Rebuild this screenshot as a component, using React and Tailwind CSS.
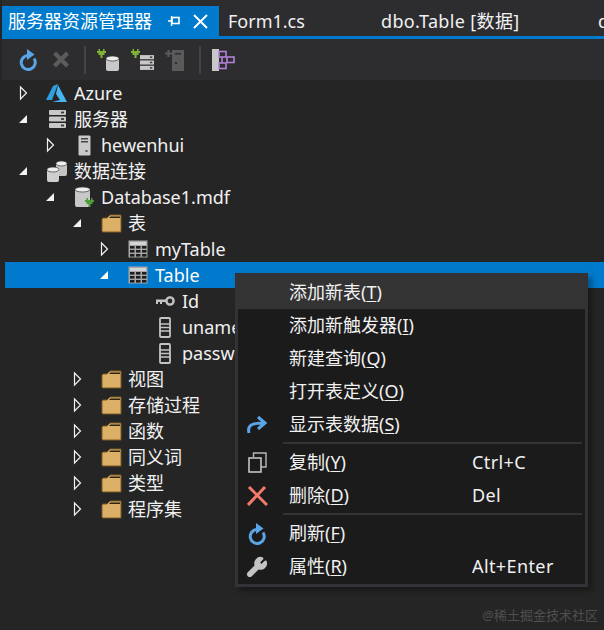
import { Wrench } from 'lucide-react'

const font = { fontFamily: '"Noto Sans", "Noto Sans CJK SC", sans-serif' }

function Expander({ open, active }) {
  if (open) {
    return (
      <svg width="12" height="12" viewBox="0 0 12 12">
        <path d="M10 2 V10 H2 Z" fill={active ? '#ffffff' : '#f1f1f1'} />
      </svg>
    )
  }
  return (
    <svg width="12" height="16" viewBox="0 0 12 16">
      <path d="M3.5 2 L9.5 8 L3.5 14 Z" fill="none" stroke="#f1f1f1" strokeWidth="1.2" />
    </svg>
  )
}

function Refresh() {
  return (
    <svg width="20" height="22" viewBox="0 0 20 22">
      <path d="M10 6.5 A7 7 0 1 0 16 9.5" fill="none" stroke="#5aa5e6" strokeWidth="3" />
      <path d="M9 0 L16.5 5.5 L9 11 Z" fill="#5aa5e6" />
    </svg>
  )
}

function Folder() {
  return (
    <svg width="21" height="20" viewBox="0 0 21 20">
      <path d="M1 6 L1 18 Q1 19 2 19 L20 19 L20 2 L9 2 L6 5 L2 5 Z" fill="#dcb067" stroke="#7b5a22" strokeWidth="1" />
      <path d="M8 5 L9.5 3.5 L19 3.5 L19 5 Z" fill="#2d2418" />
    </svg>
  )
}

function TableIcon() {
  return (
    <svg width="20" height="18" viewBox="0 0 20 18">
      <rect x="0.5" y="0.5" width="19" height="17" fill="#a8a8a8" />
      <rect x="2" y="2" width="16" height="3" fill="#d4d4d4" />
      {[6, 10, 14].map((y) =>
        [2, 8, 14].map((x) => <rect key={x + '-' + y} x={x} y={y} width="4.5" height="2.6" fill="#1e1e1e" />)
      )}
    </svg>
  )
}

function Server({ width = 17, height = 18 }) {
  return (
    <svg width={width} height={height} viewBox="0 0 17 18">
      {[0, 6.5, 13].map((y) => (
        <g key={y}>
          <rect x="0" y={y} width="17" height="5" rx="1" fill="#c8c8c8" />
          <rect x="12" y={y + 1.6} width="3" height="1.8" fill="#3a3a3a" />
        </g>
      ))}
    </svg>
  )
}

function Can({ x, y, w, h, fill = '#c4c4c4' }) {
  return (
    <g>
      <rect x={x} y={y + 2} width={w} height={h - 2} rx="2" fill={fill} />
      <ellipse cx={x + w / 2} cy={y + 2.5} rx={w / 2} ry="2.5" fill="#eeeeee" stroke="#333" strokeWidth="0.7" />
    </g>
  )
}

function Plug({ x, y, fill = '#7fb239' }) {
  return (
    <g transform={`translate(${x} ${y})`} fill={fill}>
      <rect x="0" y="2" width="9" height="2" />
      <rect x="1.5" y="4" width="6" height="2" />
      <rect x="3.5" y="6" width="2" height="3" />
      <rect x="1.5" y="0" width="1.5" height="2" />
      <rect x="6" y="0" width="1.5" height="2" />
    </g>
  )
}

function icon(name) {
  switch (name) {
    case 'azure':
      return (
        <svg width="22" height="20" viewBox="0 0 22 20">
          <path d="M12 1 L7 3 L0 17 L6 17 Z" fill="#2f9fe0" />
          <path d="M12 2 L21 19 L6 19 L14 17 L10 11 Z" fill="#48b4f0" />
        </svg>
      )
    case 'server':
      return <Server />
    case 'machine':
      return (
        <svg width="13" height="21" viewBox="0 0 13 21">
          <rect x="0.5" y="0.5" width="12" height="20" rx="1" fill="#c8c8c8" />
          <rect x="3" y="3" width="7" height="1.5" fill="#444" />
          <rect x="3" y="6" width="7" height="1.5" fill="#444" />
          <rect x="7.5" y="15" width="2" height="2" fill="#555" />
        </svg>
      )
    case 'conn':
      return (
        <svg width="22" height="22" viewBox="0 0 22 22">
          <Can x={10} y={1} w={11} h={15} fill="#c4c4c4" />
          <Can x={1} y={7} w={12} h={15} fill="#cfcfcf" />
        </svg>
      )
    case 'db':
      return (
        <svg width="21" height="22" viewBox="0 0 21 22">
          <Can x={1} y={1} w={15} h={20} fill="#c8c8c8" />
          <Plug x={11} y={12} fill="#4f9d3a" />
        </svg>
      )
    case 'folder':
      return <Folder />
    case 'table':
      return <TableIcon />
    case 'key':
      return (
        <svg width="19" height="10" viewBox="0 0 19 10">
          <circle cx="14" cy="5" r="3.6" fill="none" stroke="#c4c4c4" strokeWidth="2.4" />
          <path d="M0 3.5 H10 V6 H6 V8 H4 V6 H2 V8 H0 Z" fill="#c4c4c4" />
        </svg>
      )
    case 'column':
      return (
        <svg width="12" height="21" viewBox="0 0 12 21">
          <rect x="1" y="1" width="10" height="19" rx="1" fill="none" stroke="#c4c4c4" strokeWidth="1.8" />
          <path d="M1 7 H11 M1 10.5 H11 M1 14 H11" stroke="#c4c4c4" strokeWidth="1.5" />
        </svg>
      )
    default:
      return null
  }
}

const rows = [
  { level: 0, label: 'Azure', icon: 'azure' },
  { level: 0, label: '服务器', icon: 'server', open: true },
  { level: 1, label: 'hewenhui', icon: 'machine' },
  { level: 0, label: '数据连接', icon: 'conn', open: true },
  { level: 1, label: 'Database1.mdf', icon: 'db', open: true },
  { level: 2, label: '表', icon: 'folder', open: true },
  { level: 3, label: 'myTable', icon: 'table' },
  { level: 3, label: 'Table', icon: 'table', open: true, selected: true },
  { level: 4, label: 'Id', icon: 'key', leaf: true },
  { level: 4, label: 'uname', icon: 'column', leaf: true },
  { level: 4, label: 'password', icon: 'column', leaf: true },
  { level: 2, label: '视图', icon: 'folder' },
  { level: 2, label: '存储过程', icon: 'folder' },
  { level: 2, label: '函数', icon: 'folder' },
  { level: 2, label: '同义词', icon: 'folder' },
  { level: 2, label: '类型', icon: 'folder' },
  { level: 2, label: '程序集', icon: 'folder' },
]

const indents = ['pl-[7px]', 'pl-[34px]', 'pl-[61px]', 'pl-[88px]', 'pl-[115px]']

function TreeRow({ row }) {
  return (
    <div
      className={`flex h-[26px] items-center text-[18px] whitespace-nowrap ${indents[row.level]} ${
        row.selected ? 'bg-[#007acc] text-white' : 'text-[#f1f1f1]'
      }`}
    >
      <div className="flex w-[22px] justify-center">{!row.leaf && <Expander open={row.open} active={row.selected} />}</div>
      <div className="ml-[6px] flex w-[34px] justify-center">{icon(row.icon)}</div>
      <span>{row.label}</span>
    </div>
  )
}

function MenuItem({ label, hotkey, shortcut, glyph, active }) {
  return (
    <div className={`flex h-[33px] items-center text-[18px] text-[#f1f1f1] ${active ? 'bg-[#333334]' : ''}`}>
      <div className="flex w-[38px] justify-center">{glyph}</div>
      <span className="ml-[13px] w-[183px] whitespace-nowrap">
        {label}(<span className="underline underline-offset-2">{hotkey}</span>)
      </span>
      <span className="tracking-[0.4px]">{shortcut}</span>
    </div>
  )
}

function MenuSeparator() {
  return <div className="mb-[2px] ml-[45px] mr-[3px] mt-[1px] h-[2px] bg-[#333337]" />
}

export default function App() {
  return (
    <div className="relative h-[630px] w-[604px] overflow-hidden bg-[#252526] pl-[2px]" style={font}>
      {/* Tabs */}
      <div className="flex h-[36px] items-end overflow-hidden whitespace-nowrap bg-[#2d2d30] text-[18px] text-[#f1f1f1]">
        <div className="flex h-[30px] w-[217px] shrink-0 items-center bg-[#007acc] pl-[6px] text-white">
          <span className="w-[160px]">服务器资源管理器</span>
          <svg width="12" height="10" viewBox="0 0 12 10">
            <path d="M0 5 H4 M3.5 0 V10" stroke="#fff" strokeWidth="1.4" fill="none" />
            <rect x="4" y="1.5" width="7" height="6" stroke="#fff" strokeWidth="1.6" fill="none" />
          </svg>
          <svg className="ml-[13px]" width="15" height="15" viewBox="0 0 15 15">
            <path d="M1 1 L14 14 M14 1 L1 14" stroke="#fff" strokeWidth="1.9" />
          </svg>
        </div>
        <div className="flex h-[30px] w-[162px] shrink-0 items-center pl-[9px]">Form1.cs</div>
        <div className="flex h-[30px] w-[217px] shrink-0 items-center tracking-[0.35px]">dbo.Table [数据]</div>
        <div className="flex h-[30px] items-center">dbo</div>
      </div>
      <div className="h-[3px] bg-[#007acc]" />

      {/* Toolbar */}
      <div className="flex h-[41px] items-center bg-[#2d2d30] pl-[16px]">
        <Refresh />
        <svg className="ml-[14px]" width="18" height="17" viewBox="0 0 18 17">
          <path d="M2.5 2 L15.5 15 M15.5 2 L2.5 15" stroke="#5c5c5c" strokeWidth="4.2" />
        </svg>
        <div className="ml-[14px] h-[28px] w-[2px] bg-[#444446]" />
        <svg className="ml-[11px]" width="24" height="22" viewBox="0 0 24 22">
          <Plug x={0} y={0} />
          <Can x={9} y={7} w={13} h={15} fill="#c8c8c8" />
        </svg>
        <svg className="ml-[10px]" width="24" height="22" viewBox="0 0 24 22">
          <Plug x={0} y={0} />
          <svg x="9" y="5" width="14" height="17" viewBox="0 0 17 18">
            {[0, 6.5, 13].map((y) => (
              <g key={y}>
                <rect x="0" y={y} width="17" height="5" fill="#c8c8c8" />
                <rect x="12" y={y + 1.6} width="3" height="1.8" fill="#3a3a3a" />
              </g>
            ))}
          </svg>
        </svg>
        <svg className="ml-[10px]" width="20" height="22" viewBox="0 0 20 22">
          <rect x="7" y="1" width="12" height="21" fill="#5a5a5a" />
          <path d="M0 4.5 H7 M3.5 1 V8" stroke="#5a5a5a" strokeWidth="2.2" />
          <rect x="10" y="4" width="6" height="1.5" fill="#2d2d30" />
          <rect x="10" y="13" width="2" height="2" fill="#2d2d30" />
        </svg>
        <div className="ml-[14px] h-[28px] w-[2px] bg-[#444446]" />
        <svg className="ml-[11px]" width="23" height="22" viewBox="0 0 23 22">
          <rect x="0" y="0" width="7" height="22" fill="#c8c8c8" />
          <g fill="none" stroke="#b180d7" strokeWidth="1.6">
            <rect x="7" y="2.5" width="7" height="5.5" />
            <rect x="15" y="8" width="7" height="5.5" />
            <rect x="7" y="14" width="7" height="5.5" />
            <path d="M14 11 H15 M10 8 V14" />
          </g>
        </svg>
      </div>

      {/* Tree */}
      <div className="pl-[3px]">
        {rows.map((row) => (
          <TreeRow key={row.label} row={row} />
        ))}
      </div>

      {/* Context menu */}
      <div className="absolute left-[235px] top-[273px] w-[353px] border-[3px] border-[#333337] bg-[#1b1b1c] pb-[1px] shadow-[4px_4px_6px_rgba(0,0,0,0.35)]">
        <MenuItem label="添加新表" hotkey="T" active />
        <MenuItem label="添加新触发器" hotkey="I" />
        <MenuItem label="新建查询" hotkey="Q" />
        <MenuItem label="打开表定义" hotkey="O" />
        <MenuItem
          label="显示表数据"
          hotkey="S"
          glyph={
            <svg width="22" height="20" viewBox="0 0 22 20">
              <path d="M3 18 C1 10 6 8 18 8 M12 2 L19 8 L12 14" fill="none" stroke="#5aa5e6" strokeWidth="3" />
            </svg>
          }
        />
        <MenuSeparator />
        <MenuItem
          label="复制"
          hotkey="Y"
          shortcut="Ctrl+C"
          glyph={
            <svg width="19" height="21" viewBox="0 0 19 21">
              <path d="M5.5 5 V1 H18 V15 H13" fill="none" stroke="#b8b8b8" strokeWidth="1.4" />
              <rect x="1" y="6" width="12" height="14" fill="none" stroke="#c4c4c4" strokeWidth="1.6" />
            </svg>
          }
        />
        <MenuItem
          label="删除"
          hotkey="D"
          shortcut="Del"
          glyph={
            <svg width="21" height="20" viewBox="0 0 21 20">
              <path d="M2 1 L20 19 M18 1 L1 19" stroke="#f4786c" strokeWidth="3" />
            </svg>
          }
        />
        <MenuSeparator />
        <MenuItem label="刷新" hotkey="F" glyph={<Refresh />} />
        <MenuItem label="属性" hotkey="R" shortcut="Alt+Enter" glyph={<Wrench size={22} fill="#c4c4c4" className="text-[#c4c4c4]" />} />
      </div>

      {/* Watermark */}
      <div className="absolute bottom-[5px] right-[6px] text-[13px] text-[#4f4f50]">@稀土掘金技术社区</div>
    </div>
  )
}
